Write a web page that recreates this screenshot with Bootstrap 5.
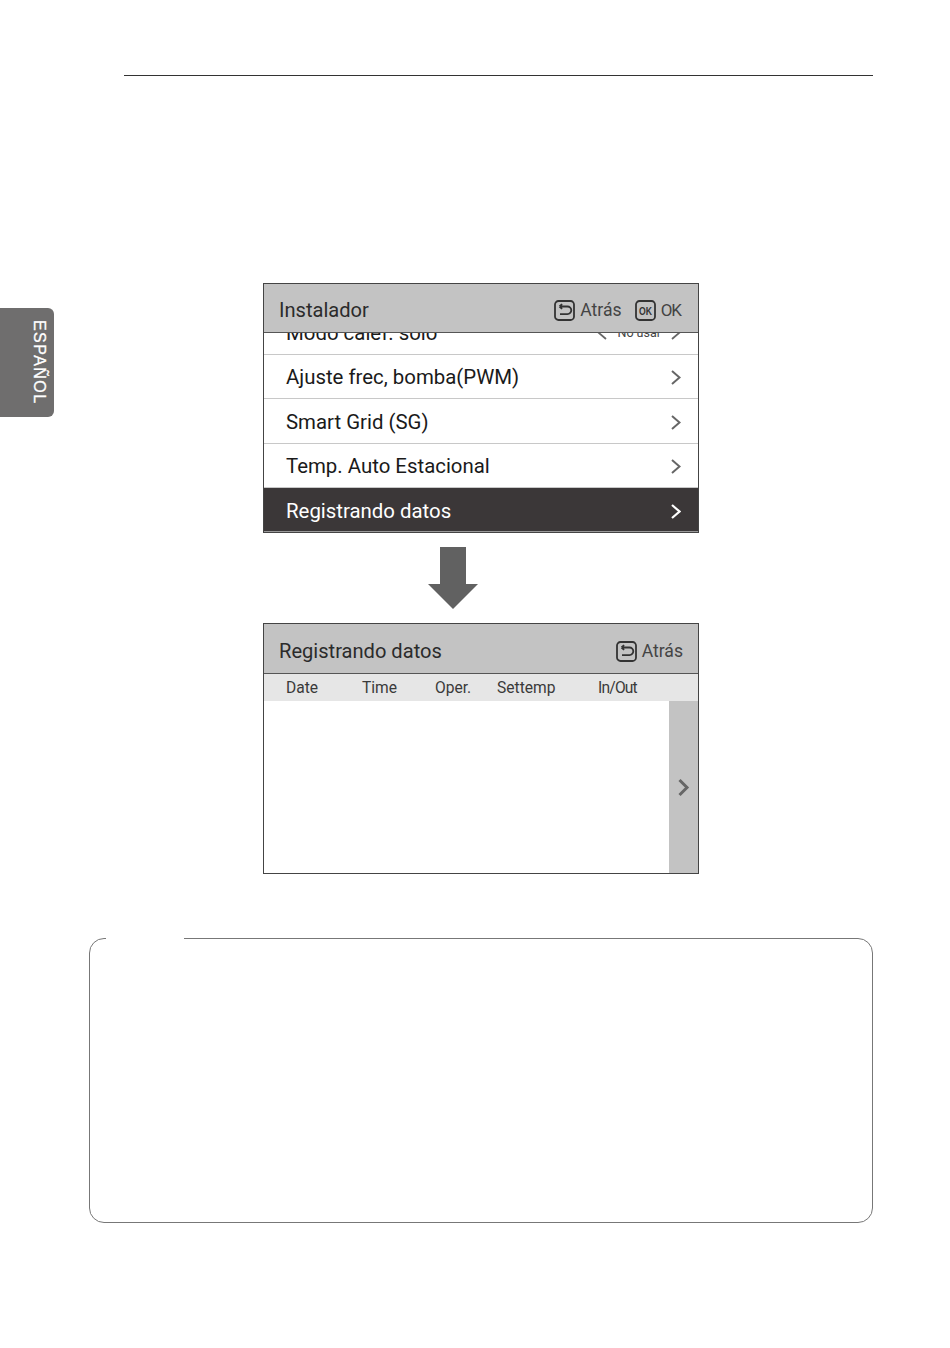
<!DOCTYPE html>
<html lang="es">
<head>
<meta charset="utf-8">
<title>Registrando datos</title>
<link href="https://cdn.jsdelivr.net/npm/bootstrap@5.3.0/dist/css/bootstrap.min.css" rel="stylesheet">
<style>
html,body{height:1348px;overflow:hidden;background:#fff}
body{font-family:Roboto,"Liberation Sans",sans-serif;color:#222}
.top-rule{height:1px;background:#333;margin:75px 77px 0 124px}
.mid-wrap{height:862px}
.side-col{width:263px;padding-top:232px}
.lang-tab{width:53.5px;height:109px;background:#6f6e6e;border-radius:0 6px 6px 0;color:#fff;writing-mode:vertical-rl;font:400 16px/1 "Liberation Sans",sans-serif;letter-spacing:1.45px;padding:12px 7px 0 0;-webkit-text-stroke:.3px #fff}
.screens{width:436px;padding-top:207px}
.lcd{border:1px solid #444;width:436px;overflow:hidden;background:#fff}
.lcd-one{height:250px}
.lcd-two{height:251px}
.lcd-head{height:49px;background:#c3c3c3;border-bottom:1px solid #555;padding:5px 15px 0;font-size:20.1px;color:#2b2b2b}
.lcd-two .lcd-head{height:50px;padding-top:6px}
.hint{font-size:17.6px;color:#444;gap:5px}
.hint-group{gap:13px}
.ok-label{letter-spacing:-1px;font-size:17px;margin-right:2px}
.clip-row{height:22px;overflow:hidden;align-items:flex-end;border-bottom:1px solid #c8c8c8}
.clip-in{height:42px;width:100%;padding:0 17px 0 22px;font-size:20.4px;color:#1a1a1a}
.menu-row{height:44.4px;padding:2px 17px 0 22px;border-bottom:1px solid #c8c8c8;font-size:20.4px;color:#1a1a1a}
.menu-row.on{background:#3b3738;color:#fff;border-bottom:1px solid #9a9a9a;height:44px;padding-top:3px}
.small-val{font-size:12.5px;color:#444;gap:10px}
.arrow-box{height:90px;padding-top:14px;padding-left:165px}
.col-head{height:27px;background:#e6e6e6;font-size:15.6px;color:#3a3a3a;padding-top:3px}
.cell-a{margin-left:22px;width:76px}
.cell-b{width:73px}
.cell-c{width:62px}
.cell-d{width:101px}
.cell-e{letter-spacing:-.8px}
.data-area{height:172px}
.pager{width:29px;background:#c3c3c3}
.note-box{width:784px;height:285px;margin-left:89px;border:1px solid #777;border-radius:15px}
.note-gap{position:absolute;left:16px;top:-1px;width:78px;height:1px;background:#fff}
</style>
</head>
<body>
<div class="top-rule"></div>
<div class="mid-wrap d-flex">
  <div class="side-col flex-shrink-0"><div class="lang-tab">ESPAÑOL</div></div>
  <div class="screens flex-shrink-0">
    <div class="lcd lcd-one">
      <div class="lcd-head d-flex align-items-center justify-content-between">
        <span>Instalador</span>
        <div class="d-flex hint-group">
          <span class="d-flex align-items-center hint">
            <svg width="21" height="21" viewBox="0 0 21 21" fill="none" stroke="#333" stroke-width="1.8"><rect x="1" y="1" width="19" height="19" rx="3.5"/><path d="M5.5 6.5h8a3.6 3.6 0 0 1 0 7.6H6M5.5 6.5l2.6-2.4M5.5 6.5l2.6 2.4"/></svg>Atrás</span>
          <span class="d-flex align-items-center hint">
            <svg width="21" height="21" viewBox="0 0 21 21" fill="none" stroke="#333" stroke-width="1.8"><rect x="1" y="1" width="19" height="19" rx="3.5"/><text x="10.5" y="14.5" text-anchor="middle" font-family="Liberation Sans" font-size="11" font-weight="700" fill="#333" stroke="none" textLength="13" lengthAdjust="spacingAndGlyphs">OK</text></svg><span class="ok-label">OK</span></span>
        </div>
      </div>
      <div class="d-flex clip-row">
        <div class="clip-in d-flex align-items-center justify-content-between flex-shrink-0">
          <span>Modo calef. solo</span>
          <span class="d-flex align-items-center small-val">
            <svg width="10" height="14" viewBox="0 0 10 14" fill="none" stroke="#666" stroke-width="1.8"><path d="M9 1 2 7l7 6"/></svg>No usar
            <svg width="10" height="14" viewBox="0 0 10 14" fill="none" stroke="#666" stroke-width="1.8"><path d="m1 1 7 6-7 6"/></svg></span>
        </div>
      </div>
      <div class="menu-row d-flex align-items-center justify-content-between"><span>Ajuste frec, bomba(PWM)</span>
        <svg width="10" height="15" viewBox="0 0 10 15" fill="none" stroke="#666" stroke-width="2"><path d="m1 1 7.5 6.5L1 14"/></svg></div>
      <div class="menu-row d-flex align-items-center justify-content-between"><span>Smart Grid (SG)</span>
        <svg width="10" height="15" viewBox="0 0 10 15" fill="none" stroke="#666" stroke-width="2"><path d="m1 1 7.5 6.5L1 14"/></svg></div>
      <div class="menu-row d-flex align-items-center justify-content-between"><span>Temp. Auto Estacional</span>
        <svg width="10" height="15" viewBox="0 0 10 15" fill="none" stroke="#666" stroke-width="2"><path d="m1 1 7.5 6.5L1 14"/></svg></div>
      <div class="menu-row on d-flex align-items-center justify-content-between"><span>Registrando datos</span>
        <svg width="10" height="15" viewBox="0 0 10 15" fill="none" stroke="#fff" stroke-width="2.2"><path d="m1 1 7.5 6.5L1 14"/></svg></div>
    </div>
    <div class="arrow-box">
      <svg class="d-block" width="50" height="62" viewBox="0 0 50 62"><path fill="#616161" d="M12 0h26v37h12L25 62 0 37h12z"/></svg>
    </div>
    <div class="lcd lcd-two">
      <div class="lcd-head d-flex align-items-center justify-content-between">
        <span>Registrando datos</span>
        <span class="d-flex align-items-center hint">
          <svg width="21" height="21" viewBox="0 0 21 21" fill="none" stroke="#333" stroke-width="1.8"><rect x="1" y="1" width="19" height="19" rx="3.5"/><path d="M5.5 6.5h8a3.6 3.6 0 0 1 0 7.6H6M5.5 6.5l2.6-2.4M5.5 6.5l2.6 2.4"/></svg>Atrás</span>
      </div>
      <div class="col-head d-flex align-items-center">
        <span class="cell-a">Date</span><span class="cell-b">Time</span><span class="cell-c">Oper.</span><span class="cell-d">Settemp</span><span class="cell-e">In/Out</span>
      </div>
      <div class="data-area d-flex justify-content-end">
        <div class="pager d-flex align-items-center justify-content-center">
          <svg width="12" height="19" viewBox="0 0 12 19" fill="none" stroke="#666" stroke-width="3"><path d="m1.5 2 7.5 7.5L1.5 17"/></svg>
        </div>
      </div>
    </div>
  </div>
</div>
<div class="note-box position-relative"><div class="note-gap"></div></div>
</body>
</html>
